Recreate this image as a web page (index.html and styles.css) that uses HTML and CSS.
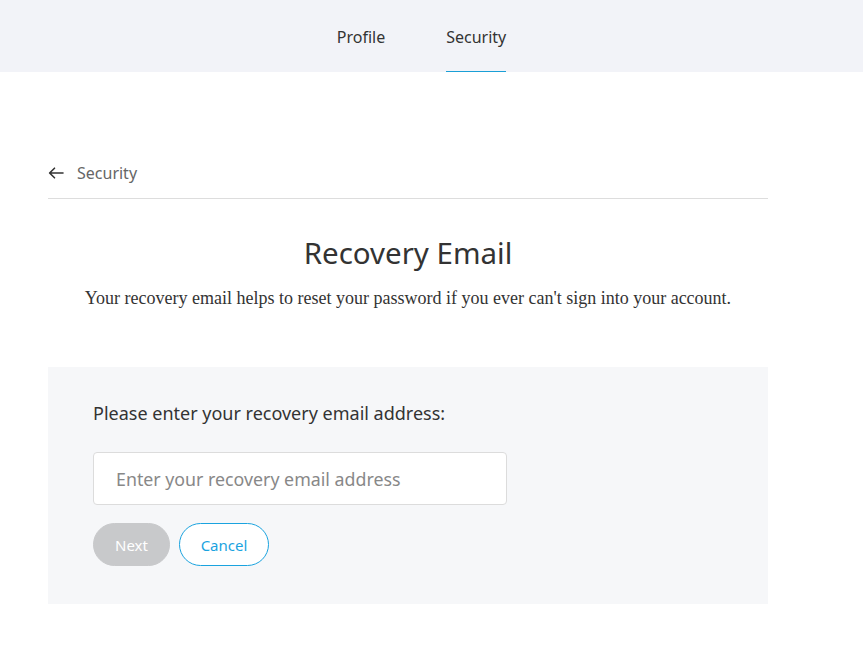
FILE: index.html
```html
<!DOCTYPE html>
<html lang="en">
<head>
    <meta charset="UTF-8">
    <meta name="viewport" content="width=device-width, initial-scale=1.0">
    <title>Recovery Email</title>
    <link rel="stylesheet" href="styles.css">
</head>
<body>
    <nav class="tabs">
        <a class="tab" href="#">Profile</a>
        <a class="tab active" href="#">Security</a>
    </nav>

    <main class="page">
        <div class="back-row">
            <svg class="back-icon" width="16" height="12" viewBox="0 0 16 12">
                <path d="M15 6H2M6.5 1.2L1.6 6l4.9 4.8" fill="none" stroke="#333" stroke-width="1.6" stroke-linecap="round" stroke-linejoin="round"/>
            </svg>
            <span class="back-label">Security</span>
        </div>

        <h1>Recovery Email</h1>
        <p class="intro">Your recovery email helps to reset your password if you ever can't sign into your account.</p>

        <section class="form-box">
            <label class="field-label" for="email">Please enter your recovery email address:</label>
            <input type="email" id="email" placeholder="Enter your recovery email address">
            <div class="actions">
                <button class="btn btn-next" disabled>Next</button>
                <button class="btn btn-cancel">Cancel</button>
            </div>
        </section>
    </main>
</body>
</html>
```

FILE: styles.css
```css
body {
    margin: 0;
    padding: 0;
    background: #fff;
    color: #333;
    font-family: 'Noto Sans', sans-serif;
}
.tabs {
    background: #f2f3f8;
    height: 72px;
    display: flex;
    justify-content: center;
    gap: 61px;
    padding-right: 20px;
}
.tab {
    display: flex;
    align-items: center;
    height: 72px;
    padding-top: 2px;
    box-sizing: border-box;
    font-size: 16px;
    color: #333;
    text-decoration: none;
    border-bottom: 1px solid transparent;
}
.tab.active {
    border-bottom-color: #1a9fd6;
}
.page {
    width: 720px;
    margin-left: 48px;
    padding-top: 89px;
}
.back-row {
    display: flex;
    align-items: center;
    height: 24px;
    padding-bottom: 13px;
    border-bottom: 1px solid #dddddd;
}
.back-icon {
    margin-right: 13px;
}
.back-label {
    font-size: 16px;
    color: #666;
}
h1 {
    font-size: 29.5px;
    font-weight: 400;
    text-align: center;
    margin: 36px 0 0;
    line-height: 36px;
}
.intro {
    font-family: 'Liberation Serif', serif;
    font-size: 18px;
    text-align: center;
    margin: 16px 0 0;
    line-height: 22px;
}
.form-box {
    background: #f6f7f9;
    margin-top: 58px;
    padding: 34px 45px 38px;
}
.field-label {
    display: block;
    font-size: 18px;
    line-height: 24px;
}
input {
    display: block;
    width: 414px;
    height: 53px;
    box-sizing: border-box;
    margin-top: 27px;
    padding: 0 22px;
    border: 1px solid #dcdcdc;
    border-radius: 4px;
    background: #fff;
    font-family: 'Noto Sans', sans-serif;
    font-size: 17.8px;
    color: #333;
    outline: none;
}
input::placeholder {
    color: #888;
}
.actions {
    display: flex;
    gap: 9px;
    margin-top: 18px;
}
.btn {
    height: 43px;
    border-radius: 22px;
    font-family: 'Noto Sans', sans-serif;
    font-size: 15px;
    padding: 0 10px;
    cursor: pointer;
}
.btn-next {
    background: #c8c9cb;
    border: 1px solid #c8c9cb;
    color: #fff;
    width: 77px;
}
.btn-cancel {
    background: #fff;
    border: 1px solid #1aa3df;
    color: #1aa3df;
    width: 90px;
}
```
